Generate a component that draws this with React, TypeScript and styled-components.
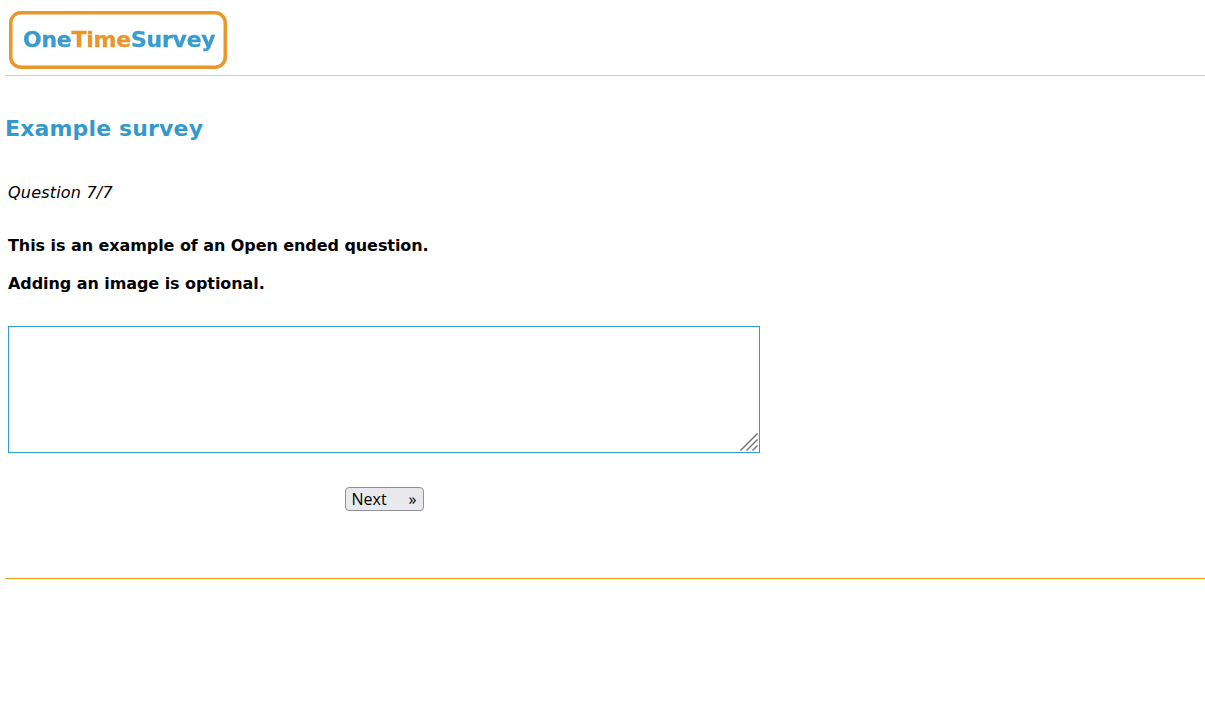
import React from "react";
import styled, { createGlobalStyle } from "styled-components";

const Global = createGlobalStyle`
  html, body { margin: 0; padding: 0; background: #fff; }
  body { font-family: "DejaVu Sans", Verdana, sans-serif; color: #000; }
`;
const Page = styled.div`
  padding-left: 5px;
  display: flex;
  flex-direction: column;
`;
const Header = styled.header`
  height: 64px;
  border-bottom: 1px solid #ccc;
  padding: 11px 0 0 4px;
  svg { display: block; filter: blur(0.35px); }
`;
const Title = styled.h1`
  margin: 40px 0 0;
  font-size: 22px;
  line-height: 26px;
  letter-spacing: 0.15px;
  font-weight: 700;
  color: #3399cc;
`;
const Body = styled.main`
  padding: 0 0 0 3px;
  display: flex;
  flex-direction: column;
  align-items: flex-start;
`;
const Progress = styled.div`
  margin-top: 41px;
  font-size: 16px;
  line-height: 20px;
  letter-spacing: 0.2px;
  font-style: italic;
`;
const QuestionLine = styled.p<{ $top: number }>`
  margin: ${(p) => p.$top}px 0 0;
  font-size: 16px;
  line-height: 20px;
  letter-spacing: -0.07px;
  font-weight: 700;
`;
const AnswerBox = styled.div`
  position: relative;
  margin-top: 32px;
  width: 752px;
  height: 127px;
`;
const Answer = styled.textarea`
  display: block;
  width: 100%;
  height: 100%;
  box-sizing: border-box;
  border: 1px solid #2f9bd0;
  background: #fff;
  padding: 2px;
  outline: none;
  resize: none;
`;
const Grip = styled.svg`
  position: absolute;
  right: 2px;
  bottom: 2px;
  display: block;
  pointer-events: none;
`;
const Actions = styled.div`
  width: 752px;
  margin-top: 34px;
  display: flex;
  justify-content: center;
`;
const NextButton = styled.button`
  width: 79px;
  height: 24px;
  box-sizing: border-box;
  border: 1px solid #8f8f9d;
  border-radius: 4px;
  background: #e9e9ed;
  color: #000;
  padding: 0 6px;
  font-family: "Open Sans", "Noto Sans", sans-serif;
  font-size: 16px;
  line-height: 22px;
  display: flex;
  justify-content: space-between;
  align-items: center;
`;
const Footer = styled.footer`
  margin-top: 67px;
  border-top: 1px solid #ec9a14;
  height: 131px;
`;

const Logo = () => (
  <svg width="218" height="58" viewBox="0 0 218 58" role="img" aria-label="OneTimeSurvey">
    <rect x="1.75" y="1.75" width="214.5" height="54.5" rx="10" fill="#fff" stroke="#e9962a" strokeWidth="3.5" />
    <text x="14" y="36" fontFamily="'DejaVu Sans', sans-serif" fontWeight="700" fontSize="22" letterSpacing="-0.25" stroke="#3a9bcd" strokeWidth="0.3" fill="#3a9bcd">
      One<tspan fill="#e9962a" stroke="#e9962a">Time</tspan>Survey
    </text>
  </svg>
);

export default function App() {
  return (
    <>
      <Global />
      <Page>
        <Header>
          <Logo />
        </Header>
        <Title>Example survey</Title>
        <Body>
          <Progress>Question 7/7</Progress>
          <QuestionLine $top={33}>This is an example of an Open ended question.</QuestionLine>
          <QuestionLine $top={18}>Adding an image is optional.</QuestionLine>
          <AnswerBox>
            <Answer />
            <Grip width="18" height="18" viewBox="0 0 18 18" fill="none" stroke="#707070" strokeWidth="1.4" strokeLinecap="square" aria-hidden="true">
              <path d="M1 17 17 1M7 17 17 7M13 17l4-4" />
            </Grip>
          </AnswerBox>
          <Actions>
            <NextButton type="button">
              <span>Next</span>
              <span>»</span>
            </NextButton>
          </Actions>
        </Body>
        <Footer />
      </Page>
    </>
  );
}
